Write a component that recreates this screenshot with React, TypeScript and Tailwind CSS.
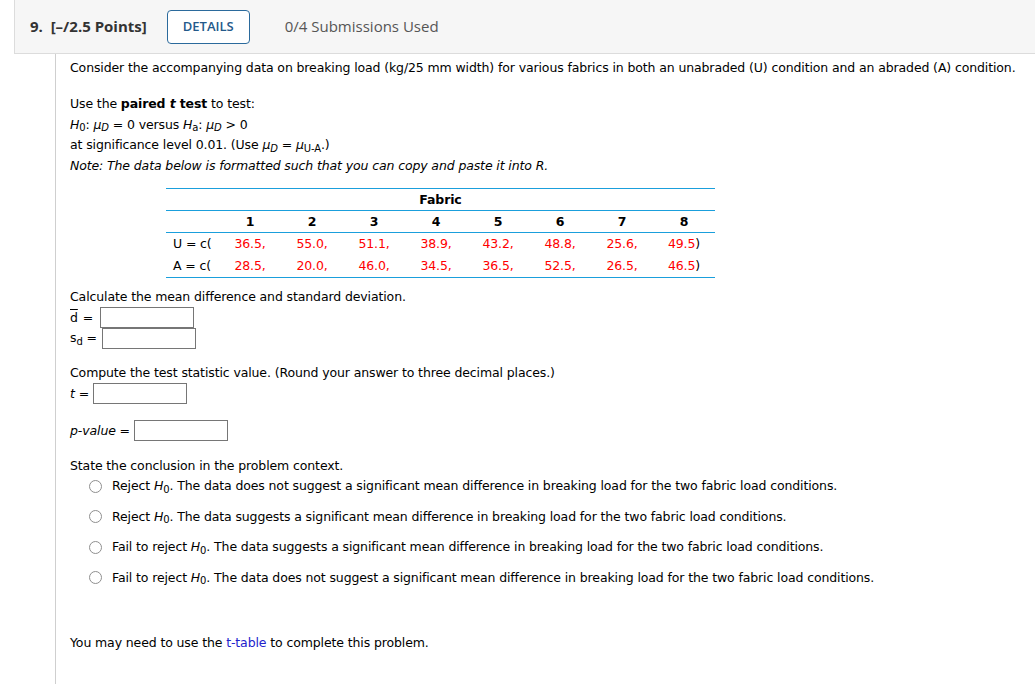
import React from 'react';

const U = ['36.5,', '55.0,', '51.1,', '38.9,', '43.2,', '48.8,', '25.6,', '49.5)'];
const A = ['28.5,', '20.0,', '46.0,', '34.5,', '36.5,', '52.5,', '26.5,', '46.5)'];

function Box() {
  return <span className="inline-block w-[94px] h-[21px] border border-[#767676] bg-white align-middle" />;
}

function H0() {
  return (
    <>
      <i>H</i>
      <sub className="text-[10px]">0</sub>
    </>
  );
}

function Radio({ children }: { children: React.ReactNode }) {
  return (
    <div className="flex items-center h-[20px] pl-[19px]">
      <span className="w-[13px] h-[13px] rounded-full border border-[#8f8f8f] bg-white mr-[10px]" />
      <span>{children}</span>
    </div>
  );
}

export default function App() {
  const options = [
    'The data does not suggest a significant mean difference in breaking load for the two fabric load conditions.',
    'The data suggests a significant mean difference in breaking load for the two fabric load conditions.',
  ];
  return (
    <div className="min-h-[684px] bg-white">
      <div className="ml-[14px] min-h-[684px]">
        {/* Header */}
        <header
          className="h-[54px] bg-[#f6f6f6] border-l border-b border-[#dcdcdc] flex items-center pl-[15px] text-[#333]"
          style={{ fontFamily: '"Open Sans", sans-serif' }}
        >
          <span className="text-[15px] font-bold">9.&nbsp; [–/2.5 Points]</span>
          <span className="ml-[20px] h-[34px] w-[83px] border border-[#2b6a9c] rounded-[4px] bg-white flex items-center justify-center text-[13px] font-semibold text-[#24598a]">
            DETAILS
          </span>
          <span className="ml-[35px] text-[15px] text-[#555]">0/4 Submissions Used</span>
        </header>

        {/* Content */}
        <main
          className="ml-[41px] border-l border-[#cfcfcf] min-h-[630px] pl-[14px] pt-[4px] text-[12.5px] tracking-[-0.12px] leading-[20px] text-black"
          style={{ fontFamily: '"DejaVu Sans", Verdana, sans-serif' }}
        >
          <p>
            Consider the accompanying data on breaking load (kg/25 mm width) for various fabrics in both an unabraded (U)
            condition and an abraded (A) condition.
          </p>

          <div className="mt-[16px] leading-[20.5px]">
            <p>
              Use the <b>paired <i>t</i> test</b> to test:
            </p>
            <p>
              <H0 />: <i>μ</i>
              <sub className="text-[10px]"><i>D</i></sub> = 0 versus <i>H</i>
              <sub className="text-[10px]">a</sub>: <i>μ</i>
              <sub className="text-[10px]"><i>D</i></sub> &gt; 0
            </p>
            <p>
              at significance level 0.01. (Use <i>μ</i>
              <sub className="text-[10px]"><i>D</i></sub> = <i>μ</i>
              <sub className="text-[10px]">U-A</sub>.)
            </p>
            <p>
              <i>Note: The data below is formatted such that you can copy and paste it into R.</i>
            </p>
          </div>

          {/* Table */}
          <div className="ml-[96px] mt-[12px] w-[549px] border-t border-b border-[#1a9fdc]">
            <div className="h-[22px] flex items-center justify-center font-bold border-b border-[#1a9fdc]">Fabric</div>
            <div className="grid grid-cols-[53px_repeat(8,62px)] h-[22px] items-center font-bold border-b border-[#1a9fdc]">
              <span />
              {[1, 2, 3, 4, 5, 6, 7, 8].map((n) => (
                <span key={n} className="text-center">{n}</span>
              ))}
            </div>
            <div className="grid grid-cols-[53px_repeat(8,62px)] h-[22px] items-center">
              <span className="pl-[7px]">U = c(</span>
              {U.map((v, i) => (
                <span key={i} className="text-center text-[#ff0000]">
                  {v.replace(')', '')}
                  {v.endsWith(')') && <span className="text-black">)</span>}
                </span>
              ))}
            </div>
            <div className="grid grid-cols-[53px_repeat(8,62px)] h-[22px] items-center">
              <span className="pl-[7px]">A = c(</span>
              {A.map((v, i) => (
                <span key={i} className="text-center text-[#ff0000]">
                  {v.replace(')', '')}
                  {v.endsWith(')') && <span className="text-black">)</span>}
                </span>
              ))}
            </div>
          </div>

          <p className="mt-[9px]">Calculate the mean difference and standard deviation.</p>
          <div className="flex items-center h-[21px]">
            <span className="overline mr-[1px]">d</span>
            <span>&nbsp;=&nbsp;</span>
            <span className="ml-[3px]"><Box /></span>
          </div>
          <div className="flex items-center h-[20px]">
            <span>
              s<sub className="text-[10px]">d</sub>
            </span>
            <span>&nbsp;=&nbsp;</span>
            <span className="ml-[1px]"><Box /></span>
          </div>

          <p className="mt-[15px]">Compute the test statistic value. (Round your answer to three decimal places.)</p>
          <div className="flex items-center h-[21px]">
            <i>t</i>
            <span>&nbsp;=&nbsp;</span>
            <Box />
          </div>

          <div className="flex items-center h-[21px] mt-[16px]">
            <i>p-value</i>
            <span>&nbsp;=&nbsp;</span>
            <Box />
          </div>

          <p className="mt-[15px]">State the conclusion in the problem context.</p>
          <div className="flex flex-col gap-[10.5px]">
            <Radio>
              Reject <H0 />. {options[0]}
            </Radio>
            <Radio>
              Reject <H0 />. {options[1]}
            </Radio>
            <Radio>
              Fail to reject <H0 />. {options[1]}
            </Radio>
            <Radio>
              Fail to reject <H0 />. {options[0]}
            </Radio>
          </div>

          <p className="mt-[45px]">
            You may need to use the <span className="text-[#2222cc]">t-table</span> to complete this problem.
          </p>
        </main>
      </div>
    </div>
  );
}
